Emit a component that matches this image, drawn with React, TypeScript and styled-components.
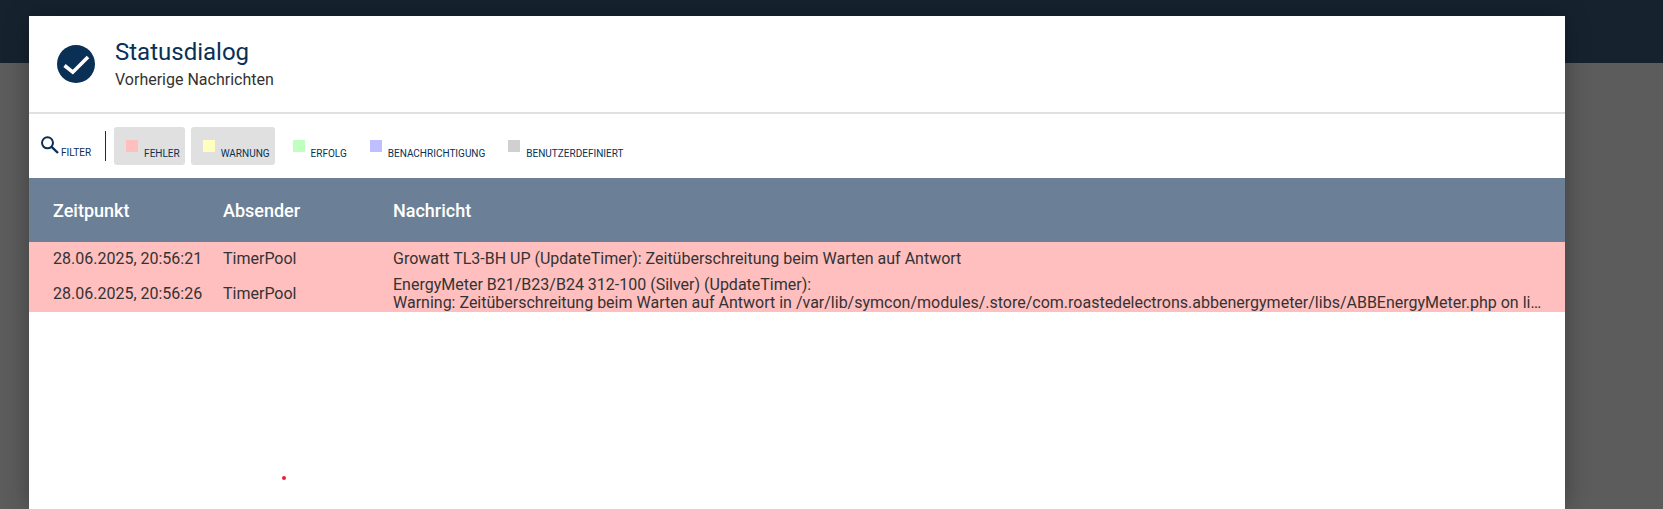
import React from "react";
import styled, { createGlobalStyle } from "styled-components";

const GlobalStyle = createGlobalStyle`
  html, body {
    margin: 0;
    height: 100%;
    overflow: hidden;
    font-family: Roboto, "Liberation Sans", sans-serif;
  }
`;

const Page = styled.div`
  position: relative;
  width: 1663px;
  height: 509px;
  overflow: hidden;
  background: #5c5c5c;
`;

const TopBar = styled.div`
  height: 63px;
  background: #16232f;
`;

const Dialog = styled.div`
  position: absolute;
  left: 29px;
  top: 16px;
  width: 1536px;
  bottom: 0;
  background: #fff;
  box-shadow: 0 0 24px rgba(0, 0, 0, 0.32);
`;

const Header = styled.header`
  display: flex;
  align-items: center;
  height: 98px;
  padding-left: 28px;
  gap: 20px;
  box-sizing: border-box;
  border-bottom: 2px solid #e0e0e0;
`;

const TitleBlock = styled.div`
  display: flex;
  flex-direction: column;
  padding-top: 1px;
`;

const Title = styled.div`
  font-size: 24px;
  line-height: 30px;
  color: #0a3055;
`;

const Subtitle = styled.div`
  margin-top: 1px;
  font-size: 16px;
  line-height: 24px;
  color: #333;
`;

const Toolbar = styled.div`
  display: flex;
  align-items: center;
  height: 64px;
  padding-left: 11px;
`;

const FilterLabel = styled.div`
  display: flex;
  align-items: flex-end;
  gap: 2px;
  padding-right: 14px;
  border-right: 1px solid #0a3055;
  height: 30px;
  box-sizing: border-box;
`;

const SearchWrap = styled.span`
  display: flex;
  margin-bottom: 7px;
`;

const SmallText = styled.span`
  font-size: 10px;
  line-height: 12px;
  color: #0a3055;
  text-transform: uppercase;
  padding-bottom: 2px;
`;

const Chips = styled.div`
  display: flex;
  gap: 6px;
  margin-left: 8px;
`;

const Chip = styled.div<{ $active?: boolean }>`
  display: flex;
  height: 38px;
  padding: 13px 5px 0 12px;
  box-sizing: border-box;
  gap: 6px;
  border-radius: 3px;
  background: ${(p) => (p.$active ? "#e0e0e0" : "transparent")};
`;

const Swatch = styled.span<{ $color: string }>`
  width: 12px;
  height: 12px;
  background: ${(p) => p.$color};
  flex: none;
`;

const ChipLabel = styled(SmallText)`
  padding: 8px 0 0;
`;

const Row = styled.div`
  display: grid;
  grid-template-columns: 170px 170px 1fr;
  align-items: center;
  padding-left: 24px;
`;

const HeadRow = styled(Row)`
  height: 64px;
  background: #6b8097;
  color: #fff;
  font-size: 18px;
  font-weight: 500;
`;

const DataRow = styled(Row)<{ $h: number }>`
  height: ${(p) => p.$h}px;
  background: #ffbfbf;
  color: #333;
  font-size: 16px;
  line-height: 18px;
`;

const Message = styled.div`
  min-width: 0;
  padding-right: 20px;
`;

const MessageLine = styled.div`
  white-space: nowrap;
  overflow: hidden;
  text-overflow: ellipsis;
`;

const Dot = styled.span`
  position: absolute;
  left: 282px;
  top: 476px;
  width: 4px;
  height: 4px;
  border-radius: 50%;
  background: #ee2233;
`;

const CheckIcon = () => (
  <svg width="38" height="38" viewBox="0 0 38 38">
    <circle cx="19" cy="19" r="19" fill="#0a3055" />
    <path d="M7.5 20.5 L15.8 27.2 L31 12" fill="none" stroke="#fff" strokeWidth="3.6" />
  </svg>
);

const SearchIcon = () => (
  <svg width="19" height="18" viewBox="0 0 19 18">
    <circle cx="7.5" cy="6.8" r="5.5" fill="none" stroke="#0a3055" strokeWidth="2" />
    <path d="M11.6 10.9 L18 17" stroke="#0a3055" strokeWidth="2.4" />
  </svg>
);

const chips = [
  { label: "Fehler", color: "#ffbfbf", active: true },
  { label: "Warnung", color: "#ffffbf", active: true },
  { label: "Erfolg", color: "#bfffbf" },
  { label: "Benachrichtigung", color: "#bfbfff" },
  { label: "Benutzerdefiniert", color: "#d0d0d0" },
];

export default function App() {
  return (
    <Page>
      <GlobalStyle />
      <TopBar />
      <Dialog>
        <Header>
          <CheckIcon />
          <TitleBlock>
            <Title>Statusdialog</Title>
            <Subtitle>Vorherige Nachrichten</Subtitle>
          </TitleBlock>
        </Header>
        <Toolbar>
          <FilterLabel>
            <SearchWrap>
              <SearchIcon />
            </SearchWrap>
            <SmallText>Filter</SmallText>
          </FilterLabel>
          <Chips>
            {chips.map((c) => (
              <Chip key={c.label} $active={c.active}>
                <Swatch $color={c.color} />
                <ChipLabel>{c.label}</ChipLabel>
              </Chip>
            ))}
          </Chips>
        </Toolbar>
        <HeadRow>
          <div>Zeitpunkt</div>
          <div>Absender</div>
          <div>Nachricht</div>
        </HeadRow>
        <DataRow $h={33}>
          <div>28.06.2025, 20:56:21</div>
          <div>TimerPool</div>
          <Message>
            <MessageLine>Growatt TL3-BH UP (UpdateTimer): Zeitüberschreitung beim Warten auf Antwort</MessageLine>
          </Message>
        </DataRow>
        <DataRow $h={37}>
          <div>28.06.2025, 20:56:26</div>
          <div>TimerPool</div>
          <Message>
            <MessageLine>EnergyMeter B21/B23/B24 312-100 (Silver) (UpdateTimer):</MessageLine>
            <MessageLine>
              Warning: Zeitüberschreitung beim Warten auf Antwort in
              /var/lib/symcon/modules/.store/com.roastedelectrons.abbenergymeter/libs/ABBEnergyMeter.php on line 1
            </MessageLine>
          </Message>
        </DataRow>
      </Dialog>
      <Dot />
    </Page>
  );
}
